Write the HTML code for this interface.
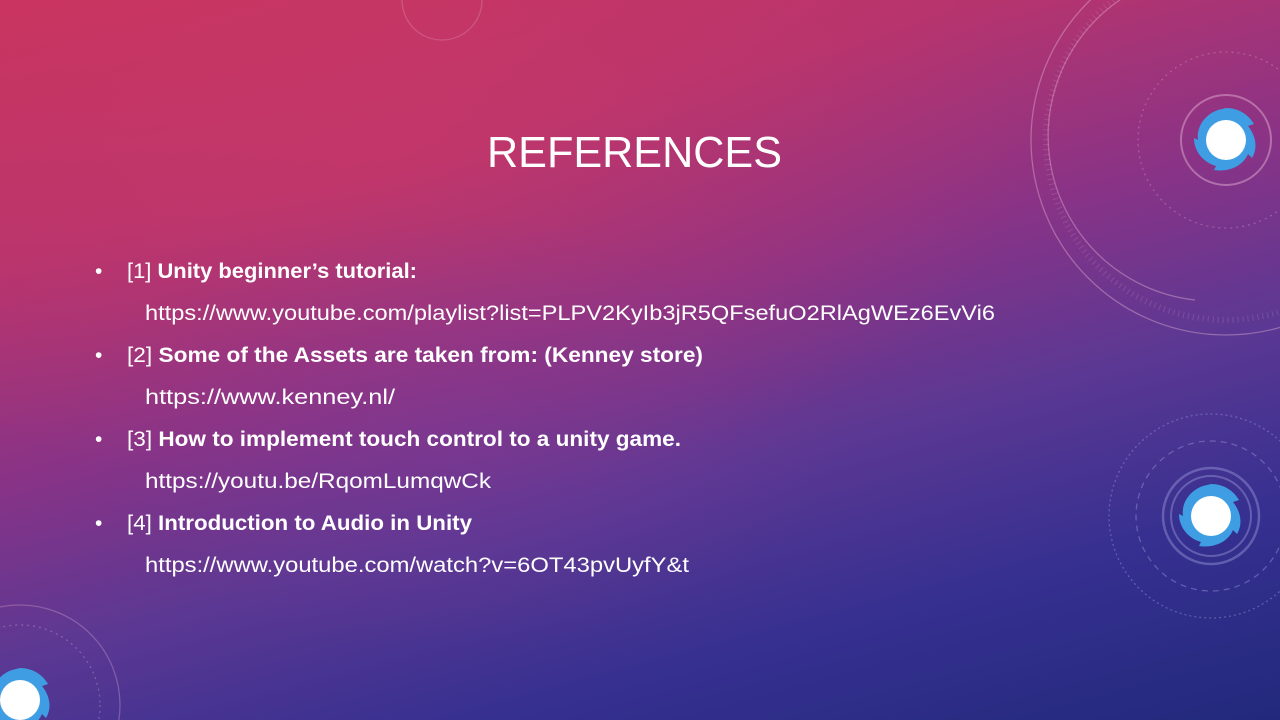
<!DOCTYPE html>
<html><head><meta charset="utf-8"><style>
html,body{margin:0;padding:0;width:1280px;height:720px;overflow:hidden}
body{background:linear-gradient(165deg,#c8345f 0%,#b6346e 25%,#8a3386 45%,#5c3893 62%,#363090 80%,#22297c 100%)}
svg{position:absolute;left:0;top:0;overflow:hidden}
</style></head><body>
<svg width="1280" height="720" viewBox="0 0 1280 720">
<defs>
<radialGradient id="g1" cx="0.3" cy="0.2" r="0.5"><stop offset="0" stop-color="#d43a63" stop-opacity="0.4"/><stop offset="1" stop-color="#d43a63" stop-opacity="0"/></radialGradient>
<radialGradient id="g2" cx="0.35" cy="0.6" r="0.3"><stop offset="0" stop-color="#7a3a98" stop-opacity="0.4"/><stop offset="1" stop-color="#7a3a98" stop-opacity="0"/></radialGradient>
<g id="emb">
<path d="M0,-32 C12,-32 22,-26 28,-16 L22,-14 C30,-4 32,8 26,18 L22,14 C16,28 0,32 -12,30 L-10,26 C-24,22 -32,10 -32,-2 L-28,0 C-30,-14 -20,-26 -8,-30 Z" fill="#3f9ee3"/>
<circle r="20" fill="#fff"/>
</g>
</defs>
<rect width="1280" height="720" fill="url(#g1)"/>
<rect width="1280" height="720" fill="url(#g2)"/>
<g fill="none" stroke="#e8b8d8" stroke-opacity="0.4" stroke-width="1.3">
<circle cx="1226" cy="140" r="195"/>
<path d="M1195,300 A165,165 0 1 1 1290,-10"/>
<circle cx="1226" cy="140" r="180" stroke-dasharray="1 4" stroke-width="6" stroke-opacity="0.18"/>
<circle cx="1226" cy="140" r="88" stroke-dasharray="2 4" stroke-opacity="0.3"/>
<circle cx="1226" cy="140" r="45" stroke-opacity="0.45" stroke-width="2"/>
<circle cx="442" cy="0" r="40" stroke-opacity="0.25"/>
<circle cx="20" cy="705" r="100" stroke-opacity="0.3"/>
<circle cx="20" cy="705" r="80" stroke-dasharray="2 4" stroke-opacity="0.3"/>
</g>
<g fill="none" stroke="#9a9ad8" stroke-opacity="0.45" stroke-width="1.3">
<circle cx="1211" cy="516" r="102" stroke-dasharray="2 3"/>
<circle cx="1211" cy="516" r="75" stroke-dasharray="6 5"/>
<circle cx="1211" cy="516" r="48" stroke-width="2.5"/>
<circle cx="1211" cy="516" r="40" stroke-width="2"/>
</g>
<use href="#emb" x="1226" y="140"/>
<use href="#emb" x="1211" y="516"/>
<use href="#emb" x="20" y="700"/>
<g fill="#fff" font-family="'Liberation Sans',sans-serif">
<text x="487" y="167" font-size="44" textLength="295" lengthAdjust="spacingAndGlyphs">REFERENCES</text>
<g font-size="21">
<text x="95" y="278">•</text><text x="95" y="362">•</text><text x="95" y="446">•</text><text x="95" y="530">•</text>
<text x="127" y="278" textLength="290" lengthAdjust="spacingAndGlyphs">[1] <tspan font-weight="bold">Unity beginner’s tutorial:</tspan></text>
<text x="145" y="320" textLength="850" lengthAdjust="spacingAndGlyphs">https://www.youtube.com/playlist?list=PLPV2KyIb3jR5QFsefuO2RlAgWEz6EvVi6</text>
<text x="127" y="362" textLength="576" lengthAdjust="spacingAndGlyphs">[2] <tspan font-weight="bold">Some of the Assets are taken from: (Kenney store)</tspan></text>
<text x="145" y="404" textLength="250" lengthAdjust="spacingAndGlyphs">https://www.kenney.nl/</text>
<text x="127" y="446" textLength="554" lengthAdjust="spacingAndGlyphs">[3] <tspan font-weight="bold">How to implement touch control to a unity game.</tspan></text>
<text x="145" y="488" textLength="346" lengthAdjust="spacingAndGlyphs">https://youtu.be/RqomLumqwCk</text>
<text x="127" y="530" textLength="345" lengthAdjust="spacingAndGlyphs">[4] <tspan font-weight="bold">Introduction to Audio in Unity</tspan></text>
<text x="145" y="572" textLength="544" lengthAdjust="spacingAndGlyphs">https://www.youtube.com/watch?v=6OT43pvUyfY&amp;t</text>
</g>
</g>
</svg>
</body></html>
